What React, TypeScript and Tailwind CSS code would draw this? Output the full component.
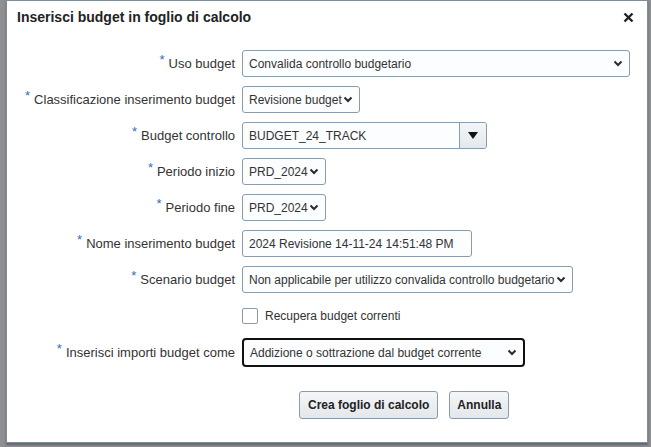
import React from "react";

function Chevron() {
  return (
    <svg width="10" height="7" viewBox="0 0 10 7" className="shrink-0">
      <polyline points="1.5,1.5 5,5 8.5,1.5" fill="none" stroke="#2b2b2b" strokeWidth="2" />
    </svg>
  );
}

function Label({ text }: { text: string }) {
  return (
    <div className="flex items-start justify-end gap-[4px] text-[13px] text-[#333]">
      <span className="text-[13px] leading-[12px] text-[#2f6fb5] -mt-[2px]">*</span>
      <span className="leading-[16px]">{text}</span>
    </div>
  );
}

function Select({ value, width, strong }: { value: string; width: string; strong?: boolean }) {
  return (
    <div
      className={`${width} flex items-center justify-between bg-[#fcfdfe] pl-[6px] pr-[6px] text-[12px] text-[#333] ${
        strong ? "h-[29px] rounded-[4px] border-2 border-[#111]" : "h-[27px] rounded-[3px] border border-[#8c9ba8]"
      }`}
    >
      <span className="whitespace-nowrap">{value}</span>
      <Chevron />
    </div>
  );
}

const rows: { label: string; value: string; width: string }[] = [
  { label: "Uso budget", value: "Convalida controllo budgetario", width: "w-[388px]" },
  { label: "Classificazione inserimento budget", value: "Revisione budget", width: "w-[118px]" },
];

export default function App() {
  return (
    <div className="w-[651px] h-[447px] bg-[#8d8f91] pl-[6px] font-['Liberation_Sans',Arial,sans-serif]">
      <div className="w-[642px] h-[443px] bg-white border border-[#7f8d99] shadow-[0_2px_2px_#5f6670] flex flex-col">
        <div className="flex items-center justify-between h-[33px] pl-[10px] pr-[13px]">
          <h1 className="text-[14px] font-bold text-[#222]">Inserisci budget in foglio di calcolo</h1>
          <svg width="11" height="11" viewBox="0 0 11 11">
            <path d="M1.5 1.5 L9.5 9.5 M9.5 1.5 L1.5 9.5" stroke="#222" strokeWidth="2.4" />
          </svg>
        </div>

        <div className="grid grid-cols-[228px_1fr] gap-x-[7px] gap-y-[9px] mt-[16px] items-center">
          {rows.map((r) => (
            <React.Fragment key={r.label}>
              <Label text={r.label} />
              <Select value={r.value} width={r.width} />
            </React.Fragment>
          ))}

          <Label text="Budget controllo" />
          <div className="w-[245px] h-[27px] flex rounded-[3px] border border-[#8c9ba8] bg-[#fcfdfe] text-[12px] text-[#333]">
            <span className="flex-1 flex items-center pl-[6px]">BUDGET_24_TRACK</span>
            <div className="w-[27px] flex items-center justify-center border-l border-[#8c9ba8] bg-gradient-to-b from-[#f3f5f7] to-[#e4e8ec] rounded-r-[3px]">
              <svg width="10" height="7" viewBox="0 0 10 7">
                <path d="M0 0 L10 0 L5 7 Z" fill="#111" />
              </svg>
            </div>
          </div>

          <Label text="Periodo inizio" />
          <Select value="PRD_2024" width="w-[84px]" />

          <Label text="Periodo fine" />
          <Select value="PRD_2024" width="w-[84px]" />

          <Label text="Nome inserimento budget" />
          <div className="w-[230px] h-[27px] flex items-center rounded-[3px] border border-[#8c9ba8] bg-[#fcfdfe] pl-[6px] text-[12px] text-[#333] whitespace-nowrap">
            2024 Revisione 14-11-24 14:51:48 PM
          </div>

          <Label text="Scenario budget" />
          <Select value="Non applicabile per utilizzo convalida controllo budgetario" width="w-[331px]" />

          <div />
          <div className="h-[27px] flex items-center gap-[7px] text-[12px] text-[#333]">
            <span className="w-[16px] h-[16px] rounded-[2px] border border-[#8c9ba8] bg-white" />
            Recupera budget correnti
          </div>

          <Label text="Inserisci importi budget come" />
          <Select value="Addizione o sottrazione dal budget corrente" width="w-[283px]" strong />
        </div>

        <div className="flex gap-[11px] pl-[292px] mt-[24px]">
          <button className="h-[28px] px-[8px] rounded-[3px] border border-[#8c9ba8] bg-gradient-to-b from-[#f4f6f8] to-[#e3e7eb] text-[12px] font-bold text-[#222]">
            Crea foglio di calcolo
          </button>
          <button className="h-[28px] px-[7px] rounded-[3px] border border-[#8c9ba8] bg-gradient-to-b from-[#f4f6f8] to-[#e3e7eb] text-[12px] font-bold text-[#222]">
            Annulla
          </button>
        </div>
      </div>
    </div>
  );
}
